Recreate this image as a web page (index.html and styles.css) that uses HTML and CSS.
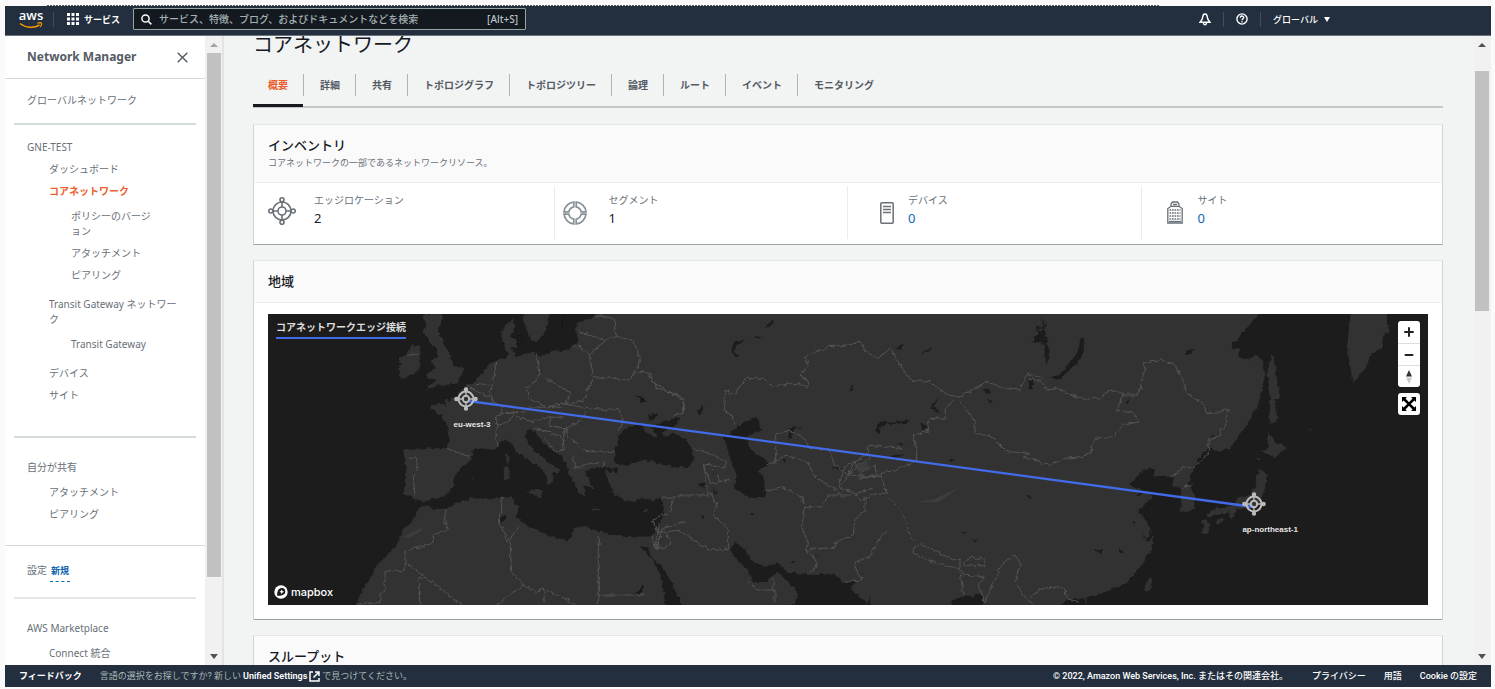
FILE: index.html
```html
<!DOCTYPE html>
<html lang="ja">
<head>
<meta charset="utf-8">
<title>Network Manager</title>
<link rel="stylesheet" href="styles.css">
</head>
<body>
<svg class="defs" width="0" height="0" aria-hidden="true">
  <defs>
    <symbol id="edge" viewBox="0 0 28 28">
      <g fill="none" stroke="currentColor" stroke-width="1.6">
        <circle cx="14" cy="14" r="9"/><circle cx="14" cy="14" r="4"/>
        <circle cx="14" cy="2.8" r="2"/><circle cx="14" cy="25.2" r="2"/><circle cx="2.8" cy="14" r="2"/><circle cx="25.2" cy="14" r="2"/>
        <path d="M14 5v5M14 18v5M5 14h5M18 14h5"/>
      </g>
    </symbol>
    <symbol id="pin" viewBox="0 0 24 24">
      <g fill="none" stroke="#bdbdbd">
        <circle cx="12" cy="12" r="7.5" stroke-width="2"/><circle cx="12" cy="12" r="3.2" stroke-width="2"/>
        <circle cx="12" cy="2.4" r="1.2" stroke-width="2"/><circle cx="12" cy="21.6" r="1.2" stroke-width="2"/><circle cx="2.4" cy="12" r="1.2" stroke-width="2"/><circle cx="21.6" cy="12" r="1.2" stroke-width="2"/>
        <path d="M12 4v4M12 16v4M4 12h4M16 12h4" stroke-width="1.4"/>
      </g>
    </symbol>
  </defs>
</svg>
<div class="dash-line"></div>
<header class="topbar">
  <a class="logo" href="#" aria-label="AWS">
    <span>aws</span>
    <svg width="24" height="7" viewBox="0 0 24 7"><path d="M1 1.5C7 6.2 15 6.4 20.5 3" fill="none" stroke="#f90" stroke-width="1.5"/><path d="M18.3 1.2C20 .6 22 .6 22.4 1.1c.4.6-.2 2.600-1.200 3.900" fill="none" stroke="#f90" stroke-width="1.200"/></svg>
  </a>
  <i class="sep"></i>
  <button class="services"><svg width="12" height="12" viewBox="0 0 12 12" fill="#fff"><path d="M0 0h3v3H0zM4.500 0h3v3h-3zM9 0h3v3H9zM0 4.500h3v3H0zM4.500 4.500h3v3h-3zM9 4.500h3v3H9zM0 9h3v3H0zM4.500 9h3v3h-3zM9 9h3v3H9z"/></svg>サービス</button>
  <label class="search">
    <svg width="11" height="11" viewBox="0 0 11 11" fill="none" stroke="#fff" stroke-width="1.500"><circle cx="4.500" cy="4.500" r="3.600"/><path d="M7.200 7.200l3.200 3.200"/></svg>
    <input type="text" aria-label="検索" placeholder="サービス、特徴、ブログ、およびドキュメントなどを検索">
    <span>[Alt+S]</span>
  </label>
  <div class="tools">
    <button aria-label="通知"><svg width="12" height="13" viewBox="0 0 12 13" fill="none" stroke="#fff" stroke-width="1.400"><path d="M6 1C4.500 1 4 2 3.900 3.400 3.700 6 2.800 7.400 1 9.200h10C9.200 7.400 8.300 6 8.100 3.400 8 2 7.500 1 6 1z"/><path d="M4.500 9.500c0 3 3 3 3 0"/></svg></button>
    <i class="sep"></i>
    <button aria-label="ヘルプ"><svg width="12" height="12" viewBox="0 0 12 12" fill="none" stroke="#fff" stroke-width="1.400"><circle cx="6" cy="6" r="5.100"/><path d="M4.300 4.800c0-2.400 3.400-2.200 3.400-.2C7.700 5.800 6 5.700 6 7.300M6 8.200v1.300"/></svg></button>
    <i class="sep"></i>
    <button class="region">グローバル<svg width="6" height="5" viewBox="0 0 6 5"><path d="M0 0h6L3 5z" fill="#fff"/></svg></button>
  </div>
</header>

<div class="shell">
  <nav class="side">
    <div class="side-body">
      <div class="side-head"><h2>Network Manager</h2><button aria-label="閉じる"><svg width="11" height="11" viewBox="0 0 11 11"><path d="M.7.7l9.600 9.600M10.300.7L.7 10.300" stroke="#545b64" stroke-width="1.400"/></svg></button></div>
      <div class="block"><a href="#">グローバルネットワーク</a></div>
      <hr>
      <div class="block tree">
        <a href="#">GNE-TEST</a>
        <ul>
          <li><a href="#">ダッシュボード</a></li>
          <li><a class="current" href="#">コアネットワーク</a>
            <ul>
              <li><a href="#">ポリシーのバージョン</a></li>
              <li><a href="#">アタッチメント</a></li>
              <li><a href="#">ピアリング</a></li>
            </ul>
          </li>
          <li class="group"><a href="#">Transit Gateway ネットワーク</a>
            <ul><li><a href="#">Transit Gateway</a></li></ul>
          </li>
          <li class="group"><a href="#">デバイス</a></li>
          <li><a href="#">サイト</a></li>
        </ul>
      </div>
      <hr>
      <div class="block shared">
        <a href="#">自分が共有</a>
        <ul><li><a href="#">アタッチメント</a></li><li><a href="#">ピアリング</a></li></ul>
      </div>
      <div class="block settings"><a href="#">設定</a> <a class="new" href="#">新規</a></div>
      <hr class="light">
      <div class="block shared">
        <a href="#">AWS Marketplace</a>
        <ul><li><a href="#">Connect 統合</a></li></ul>
      </div>
    </div>
    <div class="scroll side-scroll"><i class="up dim"></i><b></b><i class="down"></i></div>
  </nav>

  <main class="content">
    <h1>コアネットワーク</h1>
    <div class="tabs" role="tablist">
      <button role="tab" aria-selected="true">概要</button>
      <button role="tab">詳細</button>
      <button role="tab">共有</button>
      <button role="tab">トポロジグラフ</button>
      <button role="tab">トポロジツリー</button>
      <button role="tab">論理</button>
      <button role="tab">ルート</button>
      <button role="tab">イベント</button>
      <button role="tab">モニタリング</button>
    </div>

    <section class="card">
      <div class="card-head tall"><h3>インベントリ</h3><p>コアネットワークの一部であるネットワークリソース。</p></div>
      <div class="stats">
        <div class="stat"><svg class="ico hub" width="28" height="28"><use href="#edge"/></svg><dl><dt>エッジロケーション</dt><dd>2</dd></dl></div>
        <div class="stat"><svg class="ico ring" width="24" height="24" viewBox="0 0 24 24" fill="none" stroke="currentColor" stroke-width="1.700"><path d="M10.800 1v4.800A6.400 6.400 0 0 0 5.800 10.800H1A11 11 0 0 1 10.800 1zM13.200 1v4.800a6.400 6.400 0 0 1 5 5H23A11 11 0 0 0 13.200 1zM10.800 23v-4.800a6.400 6.400 0 0 1-5-5H1A11 11 0 0 0 10.800 23zM13.200 23v-4.800a6.400 6.400 0 0 0 5-5H23A11 11 0 0 1 13.200 23z"/></svg><dl><dt>セグメント</dt><dd>1</dd></dl></div>
        <div class="stat device"><svg class="ico" width="14" height="22" viewBox="0 0 14 22" fill="none" stroke="currentColor" stroke-width="1.500"><rect x=".8" y=".8" width="12.400" height="20.400" rx="1"/><path d="M3 4.500h8M3 7.500h8M3 10.500h8"/></svg><dl><dt>デバイス</dt><dd><a href="#">0</a></dd></dl></div>
        <div class="stat site"><svg class="ico" width="16" height="23" viewBox="0 0 16 23" fill="none" stroke="currentColor" stroke-width="1.300"><path d="M.8 22V7.500L4 5.300h8l3.200 2.200V22zM4 5.300V3l1.500-2h5L12 3v2.300M6 3.500h4"/><path d="M2.500 9h11M2.500 12h11M2.500 15h11M2.500 18h11" stroke-width="1.700" stroke-dasharray="1.700 .8"/><path d="M2 20.500h12"/></svg><dl><dt>サイト</dt><dd><a href="#">0</a></dd></dl></div>
      </div>
    </section>

    <section class="card">
      <div class="card-head"><h3>地域</h3></div>
      <div class="map">
        <svg class="world" viewBox="24 27 3480 873" preserveAspectRatio="none">
          <defs>
            <filter id="rough" x="0" y="0" width="100%" height="100%"><feTurbulence type="fractalNoise" baseFrequency=".07" numOctaves="2" seed="4"/><feDisplacementMap in="SourceGraphic" scale="15" xChannelSelector="R" yChannelSelector="G"/></filter>
          </defs>
          <g filter="url(#rough)">
          <rect x="-20" y="-20" width="3580" height="970" fill="#333231"/>
          <g fill="#1a1a1a">
            <path d="M-20-20H1010L1005 30 980 45 950 55 945 75 954 100 950 112 930 130 905 138 880 135 860 150 840 155 820 140 790 148 770 155 757 140 752 125 772 130 765 100 750 95 766 60 760 42 745 50 728 70 725 95 730 120 745 145 738 160 715 165 690 175 665 205 645 230 620 240 600 258 595 275 575 280 570 290 552 280 558 302 545 297 512 300 512 312 540 328 555 345 565 370 567 400 560 430 500 430 435 432 430 445 440 480 435 530 430 570 450 572 470 585 490 592 515 580 550 578 580 545 580 520 600 490 630 465 640 450 640 435 665 430 700 435 720 415 740 405 760 420 775 445 820 475 850 495 865 525 862 547 880 530 875 505 895 505 898 495 865 470 830 445 810 420 795 395 800 375 820 375 840 400 870 430 905 455 920 480 925 505 940 535 960 565 975 575 980 560 965 545 1000 550 985 520 975 495 1000 488 1040 485 1035 505 1045 530 1060 565 1090 585 1120 590 1150 578 1180 588 1205 575 1210 600 1212 630 1195 660 1178 694 1100 697 1060 690 1020 680 970 662 940 670 925 712 900 700 850 685 800 660 770 635 775 610 755 575 700 580 640 580 590 595 560 612 520 612 490 600 470 620 455 650 425 675 410 720 370 760 340 800 310 850 290 895V950H-20z"/>
            <path d="M1085 380L1120 360 1145 362 1160 385 1190 395 1180 370 1205 372 1215 398 1240 383 1280 405 1302 460 1290 485 1240 487 1200 475 1150 465 1095 482 1062 470 1066 430zM1170 370L1205 350 1250 340 1262 338 1240 365 1210 380zM1140 722L1175 760 1205 820 1222 935H1277L1250 860 1210 790 1160 740 1178 760 1165 730zM718 640L735 630 735 645 722 655z"/>
            <path d="M1125 270l30 12-10 8zM1120 870l30-30v20l-30 15zM1168 340l20-16 5 5-20 18zM1040 488l40 4-10 10-30-6z"/>
            <path d="M775 90l15 5-5 25-20-10zM905 40l6-5-8 35z"/>
          </g>
          <g fill="#333231">
            <path d="M490 27H550L545 55 530 75 545 95 560 130 575 165 585 185 610 188 605 210 592 235 555 240 525 242 497 258 515 238 530 225 500 218 505 205 530 190 512 170 535 155 530 130 505 105 490 80 500 60 488 45z"/>
            <path d="M455 118L480 125 485 145 478 165 480 195 440 215 415 218 420 200 412 195 425 180 415 160 440 148zM790 10H868L865 60 850 90 828 110 815 105 800 75 790 50zM735 450l10-5 4 22-8 10zM730 490l15-10 5 40-15 8zM800 557l30-2 20-3-8 25-38-15zM985 610l40 2-20 6zM1145 615l20-3-10 10zM630 512l14 6-6 5z"/>
          </g>
          <g transform="translate(1140 0)" fill="#1a1a1a">
            <path d="M250 395L290 370 320 345 355 340 362 378 335 385 320 400 330 430 350 450 372 458 388 480 350 495 372 520 375 575 345 580 310 570 285 550 290 510 275 470 262 430zM270 735L285 712 315 730 335 770 370 785 415 775 440 800 510 810 580 805 610 835 650 830 630 850 650 870 685 895 690 870 697 940H440L475 865 450 835 410 800 380 830 340 832 325 795 300 775zM937 885L980 870 1000 875 1015 862 1030 880V950H937z"/>
            <path d="M280 112l38-5-30 15-5 20 12 10-10 6-10-20zM345 92l25 5-20 3zM375 65l20-15 2-15 5 20-26 14zM840 150l30-25 10 5-28 14zM775 120l12 0-5 14-10-2zM705 375l15-25 60 0 28-5-10 12-55 0-25 12-2 20zM445 400l5-30 42-8-30 12-15 30zM575 487l35 3-20 4zM750 452l42-5-30 14zM768 415l24 3-8 6zM875 295l22-15-18 25 25 18-20-6-8-10zM840 352l18 10v18l-12-8zM1030 250l14 0 6 12-16 4zM1040 282l18 6-8 6zM1167 225l13-5-5 30-8 0zM170 322l24-24-10 28-8 2zM0 278l18 8-12 4zM25 330l28-3-25 20zM216 490l12 12 0 10-10-8zM220 545l15 26-14-5zM175 540l20-10-8 16zM185 628l8 12-8 0zM926 462l20 2-14 6zM1160 570l18 10-15 0zM968 680l16 4-14 4zM996 705l14-4-4 8zM427 462l14 0-6 12zM625 250l18-8-10 18zM330 625l14 0-8 8zM452 768l10 0-4 8zM525 748l12 8-8 0zM0 850l14-14-10 26zM1188 60l16 10-14 5zM1185 95l25-12-8 28-25 0z"/>
          </g>
          <g transform="translate(2310 0)">
            <path fill="#1a1a1a" d="M700-20H1260V950H165L170 880 230 860 290 835 335 780 350 750 365 740 370 690 350 650 325 615 350 590 372 575 350 565 320 570 330 550 300 540 310 530 335 500 365 488 375 495 368 515 405 512 430 520 428 545 455 545 450 560 455 600 450 625 495 610 498 570 475 540 485 510 505 460 535 430 570 440 600 430 630 385 670 330 690 280 705 210 700 170 680 150 650 165 625 155 630 135 600 125 640 80 690 27z"/>
            <path fill="#1a1a1a" d="M152 100l12 0-5 50-35 40-32 32-35-4 30-8 35-40 22-30zM35 30l5 30 16-8-14 20 10 40 5 50-8 20-6-60-15-15-18 8 18-24-12-20 20 8zM465 140l28-12-12 20-14 4zM288 290l12-8-8 18zM545 390l12 2-6 10zM195 735l22 0-8 10zM266 730l14 8-8 10zM308 648l10 4-8 4zM338 690l8 6-8 4zM360 680l10 5-12 25-12 2zM100 890l40-10 25 5 5 65H100zM0 575l8 5-8 4zM0 225l8 5-8 20z"/>
            <path fill="#333231" d="M725 143L735 180 750 278 733 282 740 350 718 358 720 290 712 200zM710 380L740 415 770 425 735 460 695 440 715 425zM690 490L712 510 705 550 693 590 660 612 622 610 605 645 595 622 540 635 525 630 560 610 610 600 625 580 655 575 678 540 683 505zM555 645l30-8-5 12-20 10zM515 645l18 0 8 20-12 25-14-5 5-20zM360 815l8 5-5 30-12 12-10-10zM970 10H1080L1070 40 1080 80 1060 90 1055 130 1020 150 1010 185 970 232 958 170 950 110 955 60zM682 455l10 5-6 10z"/>
            <path d="M780 410l40-22M830 380l30-14" stroke="#333231" stroke-width="3" stroke-dasharray="5 8"/>
          </g>
          <g fill="none" stroke="#555453" stroke-width="3">
            <path d="M1005 30l55 10 8 50-30 15-80-25M1038 105l-50 45-25-25h-20M988 150l10 55-5 10M998 215l60 5 50 5 20-30 15-30-25-60-50-10M1108 225l25-25 30 5 15 25 40 25 50 30 5 30-30 20M830 145l8 75M838 220l-40 30 15 35 45 20 60-10 15-30-75-45M998 220l-15 30-10 35-55 10M710 170l-10 60-10 30 10 30 25 15 0 20-15 10 0 30-5 20 10 40M620 240l30 20 40 15M650 235l40 5M725 325l40 0 50-15 45-5 45 0M765 325l-20 25-40 10M765 335l50 15 60-15 35 5M900 295l60 10 80 10 35-5 15 40-15 25M875 335l-10 25 50 10 45-20 20-30M915 370l-10 60M915 370l10 25 50 45 90 0M870 390l30 0 15 40-30 10-30-40M940 455l5 35 35-10 55-10-5 15M820 370l50 10M560 430l70 25M440 460l30 0 0 30-10 25 5 55M445 148l30 0M725 580l0 45-10 20 30 65 35-45M750 710l5 90 35 40 40 20 20-10 60 30 60 30M790 840l-80 60M850 850l5 45M555 612l0 40 10 20-40 15-10 30-80 20 0 60h-60v60l-15 10v25l-65 5M435 770l170 130M490 820l-15 0 5 80M1015 690v210M1015 870h140M1175 690l15 50 10-50"/>
            <g transform="translate(1140 0)">
              <path d="M285 355l-10-25-25-15 5-60 25 15 40-50 50 0 30 25 60-10 45 10-5-20-20-15 25-30-10-25 70-30 60-5 40-10 10 30 40 20 35-30 60 95 60 5 50 40 40 5 80-45 50 20 50 5 20-50 50 15M945 285l-30 25 0 30-45 0-10 40-40 10 10 40 0 35-60 30-50 10 20 60-40 0-35 25-30-30-40-15 20-60 70-40 0-25 100 10M955 285l30 35 20 30 0 35 50 10 45 45 70 5M407 475V390l40-15 50 30 10 25 60 5 20 45 35 30 40-35 30-20M600 550l25-40 60 5 40 0M380 480l60-30 60 20 30 50 60 35M620 515l25-45 20 30 40-20 10 30-60 10M375 560l50-15 60 30 10 30 50 0 20-35 70 0 60-20M495 605l-10 60 20 50-10 20 35 30 0 25-25 15M510 730l70 0 10-20 50-20 5-50 30-20 0-45M740 675l-30 40-20 40-50 20 25 50-50 5M820 730l20-15 40 20 60 30 20-5 0 30-60-10-50-20-30-15zM970 775l20-18 45 5 0 20-60 0zM960 790l10 20 60 5-15 30 15 30 0 30M960 800l10 70M1035 890l50-110 40-30 15 30-15 50 25 40 40 40M65 580l75-10 75 0 15 30-10 30 45 40 0 60-55 5-95-60-65 10-10-40 50-25 10-40M45 730l25-60 70-20M55 660l-10 70 30 0 20-15-15-30M160 430l50 15 50 25-10 20-60-15 20 60 60-10M215 490l30 40M190 475l15 100M325 830l30 25 50 0 0 40M400 820l0 40M0 200l30 5 20 45 50 15 35 15-5 40-30 15"/>
              <path d="M740 575l35 30 25 50 10 40 20 20" stroke-dasharray="8 8"/>
            </g>
            <g transform="translate(2310 0)">
              <path d="M0 220l35 10 15 25 30-5 70 30 60 0 30-25 40 10-20 50 45 5 25 30-50 10-35 35-50 5-15 45-25 10-50 5-50 20-75-25M280 270l45 0 20-80-5-15 50-10 40 10 25 40 15 50 50 30 10 30 30 0 35-15-10 45-20 40-30 10 0 40-45 45-30-5-40 35M450 550l35-10M0 880l35-30 50-5 20 10 5 25 35 10"/>
            </g>
          </g>
          </g>
          <g fill="#424140" opacity=".7"><path d="M430 695l50-25 10 5-45 25zM1960 592l65-10 80-40-70 50zM1780 480l40-12 10 25-30 10z"/></g>
          <path d="M624 288L2982 606" fill="none" stroke="#426bea" stroke-width="7"/>
        </svg>
        <div class="map-title">コアネットワークエッジ接続</div>
        <div class="pin paris"><svg width="24" height="24"><use href="#pin"/></svg><span>eu-west-3</span></div>
        <div class="pin tokyo"><svg width="24" height="24"><use href="#pin"/></svg><span>ap-northeast-1</span></div>
        <div class="mapbox"><svg width="14" height="14" viewBox="0 0 14 14"><circle cx="7" cy="7" r="6.700" fill="#fff"/><path d="M3.200 10.800C3 7 4 3 7.800 3a3.700 3.700 0 0 1 3.500 3.800C11.300 10 7 11.200 3.200 10.800z" fill="#1a1a1a"/><path d="M7.700 4.500l.8 1.600 1.600.7-1.600.8-.8 1.600-.7-1.600-1.600-.8 1.600-.7z" fill="#fff"/></svg>mapbox</div>
        <div class="controls">
          <div class="ctl">
            <button aria-label="拡大"><svg width="10" height="10" viewBox="0 0 10 10"><path d="M5 1v8M1 5h8" stroke="#222" stroke-width="2" stroke-linecap="round"/></svg></button>
            <button aria-label="縮小"><svg width="10" height="10" viewBox="0 0 10 10"><path d="M1.500 5h7" stroke="#222" stroke-width="2" stroke-linecap="round"/></svg></button>
            <button aria-label="北向き"><svg width="8" height="14" viewBox="0 0 8 14"><path d="M1 6.500L4 0l3 6.500z" fill="#333"/><path d="M1 7.500L4 14l3-6.500z" fill="#ccc"/></svg></button>
          </div>
          <div class="ctl">
            <button aria-label="全画面"><svg width="14" height="14" viewBox="0 0 14 14"><path d="M0 0h5L3.500 1.600 7 5.300l3.500-3.700L9 0h5v5l-1.600-1.500L8.700 7l3.700 3.500L14 9v5H9l1.500-1.600L7 8.700l-3.500 3.700L5 14H0V9l1.600 1.500L5.300 7 1.600 3.500 0 5z"/></svg></button>
          </div>
        </div>
      </div>
    </section>

    <section class="card"><div class="card-head"><h3>スループット</h3></div></section>
  </main>
  <div class="scroll page-scroll"><i class="up"></i><b></b><i class="down"></i></div>
</div>

<footer class="foot">
  <a class="strong" href="#">フィードバック</a>
  <p>言語の選択をお探しですか? 新しい <a class="strong" href="#">Unified Settings<svg width="11" height="11" viewBox="0 0 11 11" fill="none" stroke="#fff" stroke-width="1.500"><path d="M4 1H1v9h9V7M6 1h4v4M10 1L4.500 6.500"/></svg></a> で見つけてください。</p>
  <div class="legal"><span>© 2022, Amazon Web Services, Inc. またはその関連会社。</span><a href="#">プライバシー</a><a href="#">用語</a><a href="#">Cookie の設定</a></div>
</footer>
</body>
</html>
```
FILE: styles.css
```css
* { box-sizing: border-box; }
html, body { height: 100%; }
body {
  margin: 0;
  padding: 5px 4px 2px 5px;
  display: flex;
  flex-direction: column;
  background: #fafafa;
  color: #16191f;
  font: 10px/15px "Noto Sans", "Noto Sans CJK JP", sans-serif;
  overflow: hidden;
}
h1, h2, h3, p, ul, dl, dd, hr { margin: 0; padding: 0; }
ul { list-style: none; }
a { color: inherit; text-decoration: none; }
button, input { font: inherit; color: inherit; background: none; border: 0; padding: 0; }
svg { display: block; flex: none; }
.defs { position: absolute; }

.dash-line {
  flex: none;
  height: 1px;
  margin: 0 332px 0 42px;
  background: repeating-linear-gradient(90deg, #555 0 2px, #fafafa 2px 3px);
}

.topbar {
  flex: none;
  display: flex;
  align-items: center;
  height: 30px;
  padding: 0 161px 3px 14px;
  background: #232f3e;
  border-bottom: 1px solid #6b747e;
  color: #fff;
  font-size: 9px;
  font-weight: 500;
}
.logo { display: flex; flex-direction: column; align-items: center; width: 24px; }
.logo span { font: 600 13px/12px "Open Sans", sans-serif; height: 13px; }
.sep { width: 1px; height: 15px; background: #414d5c; }
.logo + .sep { margin: 0 13px 0 10px; }
.services { display: flex; align-items: center; gap: 5px; font-weight: 700; white-space: nowrap; }
.search {
  display: flex;
  align-items: center;
  gap: 7px;
  width: 393px;
  height: 22px;
  margin-left: 13px;
  padding: 0 7px;
  background: #14181f;
  border: 1px solid #95a5a6;
  border-radius: 1px;
  color: #b8c4c6;
  font-size: 10px;
}
.search input { flex: 1; min-width: 0; }
.search input::placeholder { color: #a3b1b3; opacity: 1; }
.tools { display: flex; align-items: center; gap: 12px; margin-left: auto; }
.region { display: flex; align-items: center; gap: 6px; }

.shell { flex: 1; min-height: 0; display: flex; background: #f2f3f3; }

.side { display: flex; flex: none; width: 219px; border-right: 2px solid #e1e3e4; overflow: hidden; background: #fff; }
.side-body { flex: 1; color: #687078; }
.side-head {
  display: flex;
  align-items: center;
  justify-content: space-between;
  height: 43px;
  padding: 0 17px 0 22px;
  border-bottom: 1px solid #d5dbdb;
}
.side-head h2 { font: 700 12px/20px "Noto Sans", sans-serif; color: #545b64; }
.block { padding: 14px 23px 15px 22px; line-break: anywhere; }
.block a { display: block; }
.side hr { height: 2px; margin: 0 9px; border: 0; background: #d5dbdb; }
.side hr.light { background: #e4e7e8; }
.block li { padding-top: 7px; }
.block > ul { padding-left: 22px; }
.block ul ul { padding: 3px 25px 0 22px; }
.block li.group { padding-top: 14px; }
.block a.current { color: #eb5f2d; font-weight: 700; }
.block.tree { padding: 15px 23px 33px 22px; }
.block.shared { padding: 22px 23px 23px 22px; }
.shared > ul { padding-top: 3px; }
.block.settings { display: flex; gap: 3px; padding: 17px 22px 15px; border-top: 1px solid #d5dbdb; }
.settings .new { padding: 0 1px 3px 1px; border-bottom: 1px dashed #0073bb; color: #0a5fae; font-size: 9px; font-weight: 700; }

.scroll { flex: none; display: flex; flex-direction: column; width: 17px; padding: 7px 1px 6px 2px; background: #f1f1f1; }
.scroll b { width: 14px; background: #c1c1c1; }
.scroll i { width: 0; height: 0; margin-left: 3px; border: 4px solid transparent; }
.scroll .up { border-top: 0; border-bottom: 4px solid #505050; }
.scroll .dim { border-bottom-color: #a3a3a3; }
.scroll .down { border-bottom: 0; border-top: 5px solid #505050; margin-top: auto; }
.side-scroll b { height: 85%; margin-top: 6px; }
.page-scroll b { height: 39%; margin-top: 24px; }
.page-scroll { padding-right: 2px; padding-left: 1px; }

.content { flex: 1; min-width: 0; padding: 0 31px 0 29px; overflow: hidden; }
h1 { font-size: 20px; line-height: 18px; font-weight: 400; }
.tabs { display: flex; align-items: center; height: 44px; margin: 10px 0 16px; border-bottom: 2px solid #c3c9ca; }
.tabs button { height: 22px; padding: 0 15px 0 16px; border-left: 1px solid #aab7b8; color: #545b64; font-weight: 700; white-space: nowrap; }
.tabs button:first-child {
  align-self: stretch;
  height: auto;
  margin-bottom: -1px;
  padding: 3px 15px 0;
  border-left: 0;
  border-bottom: 3px solid #16191f;
  color: #eb5f2d;
}

.card { margin-bottom: 15px; background: #fff; border: 1px solid #e4e7e8; border-right-color: #d0d5d6; border-left-color: #d0d5d6; border-bottom-color: #99a3a4; }
.card-head { padding: 10px 14px 11px; background: #fafafa; border-bottom: 1px solid #eaeded; }
.card-head.tall { padding: 10px 14px 12px; }
.card-head h3 { font-size: 13px; line-height: 20px; font-weight: 500; }
.card-head p { color: #687078; font-size: 9px; line-height: 15px; }
.stats { display: grid; grid-template-columns: repeat(4, 1fr); padding: 3px 8px 5px 6px; }
.stat { display: flex; align-items: center; gap: 18px; height: 53px; padding-left: 8px; color: #687078; }
.stat + .stat { border-left: 1px solid #eaeded; }
.stat .hub { margin-bottom: 4px; }
.stat .ring { margin-right: 4px; color: #879196; }
.stat.device { padding-left: 32px; gap: 14px; }
.stat.site { padding-left: 25px; gap: 15px; }
.stat dl { padding-bottom: 4px; }
.stat dt { line-height: 15px; }
.stat dd { color: #16191f; font-size: 13px; line-height: 20px; }
.stat dd a { color: #1166bb; }

.map { position: relative; margin: 11px 14px 14px; overflow: hidden; background: #1a1a1a; aspect-ratio: 1160 / 291; }
.world { width: 100%; height: 100%; overflow: visible; }
.map-title { position: absolute; left: 8px; top: 5px; padding-bottom: 1px; color: #ddd; font-weight: 700; line-height: 17px; border-bottom: 2px solid #426bea; }
.pin { position: absolute; display: flex; flex-direction: column; width: 24px; color: #e6e6e6; font: 700 8px/10px "Liberation Sans", sans-serif; gap: 9px; white-space: nowrap; }
.paris { left: 16%; top: 25%; }
.tokyo { left: 84%; top: 61%; }
.mapbox { position: absolute; left: 6px; bottom: 6px; display: flex; align-items: center; gap: 3px; color: #fff; font: 500 11px/14px Inter, sans-serif; }
.controls { position: absolute; right: 8px; top: 7px; display: flex; flex-direction: column; gap: 6px; }
.ctl { overflow: hidden; background: #fff; border-radius: 3px; }
.ctl button { display: flex; align-items: center; justify-content: center; width: 22px; height: 22px; }
.ctl button + button { border-top: 1px solid #ddd; }

.foot { flex: none; display: flex; align-items: center; gap: 18px; height: 22px; padding: 0 14px 0 14px; background: #232f3e; color: #fff; font: 500 9px/15px Roboto, "Noto Sans CJK JP", sans-serif; white-space: nowrap; }
.foot p { display: flex; gap: 2px; color: #aab7b8; font-weight: 400; }
.foot .strong { color: #fff; font-weight: 600; }
.foot p .strong { display: flex; align-items: center; gap: 2px; }
.legal { display: flex; gap: 18px; margin-left: auto; font-weight: 500; }
.legal span { margin-right: 6px; }
```
